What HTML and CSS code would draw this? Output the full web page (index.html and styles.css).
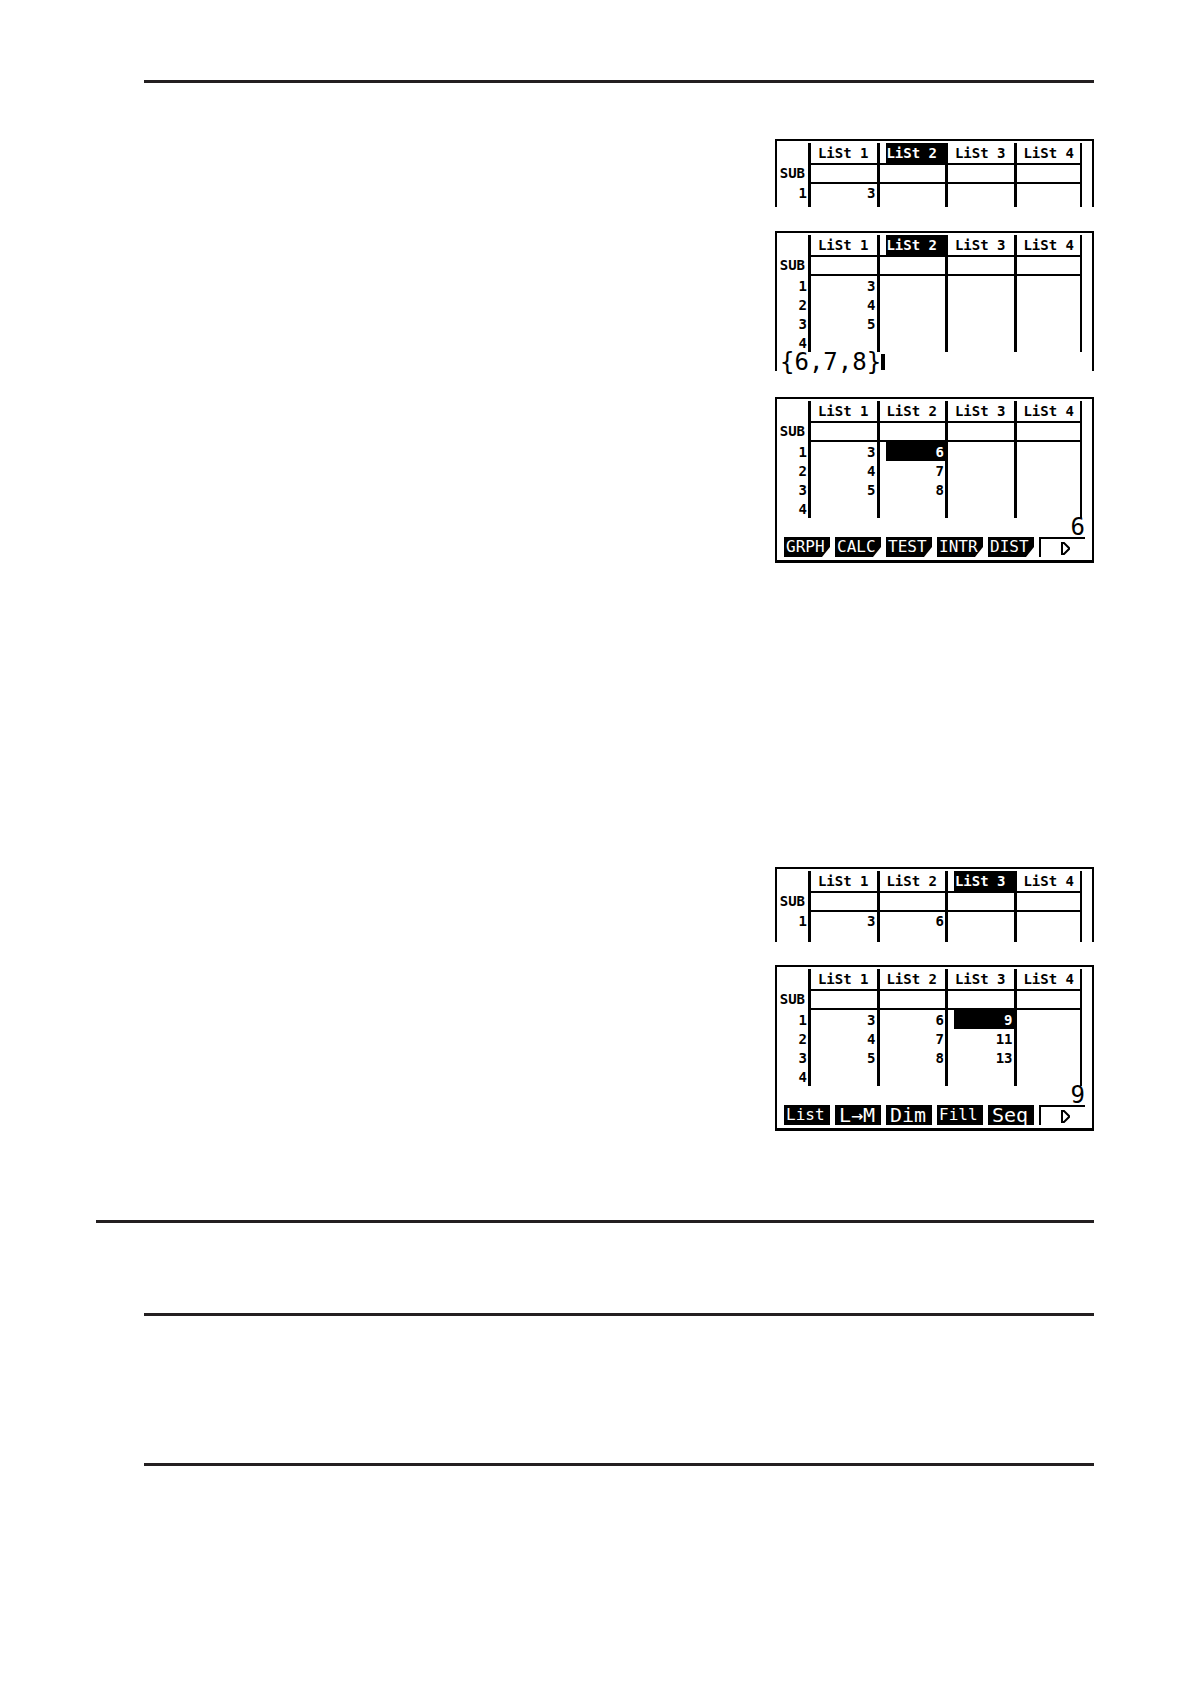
FILE: index.html
```
<!DOCTYPE html>
<html lang="en">
<head>
<meta charset="utf-8">
<meta name="viewport" content="width=device-width, initial-scale=1">
<title>List calculations</title>
<link rel="stylesheet" href="styles.css">
</head>
<body>
<main class="page">
  <hr class="rule rule-inset">

  <section class="screens screens-first">
    <div class="screen screen-open">
      <table class="lists">
        <thead>
          <tr><td></td><th>LiSt 1</th><th class="selected">LiSt 2</th><th>LiSt 3</th><th>LiSt 4</th></tr>
          <tr class="sub"><th>SUB</th><td></td><td></td><td></td><td></td></tr>
        </thead>
        <tbody>
          <tr class="last"><th>1</th><td>3</td><td></td><td></td><td></td></tr>
        </tbody>
      </table>
    </div>

    <div class="screen screen-open screen-entry">
      <table class="lists">
        <thead>
          <tr><td></td><th>LiSt 1</th><th class="selected">LiSt 2</th><th>LiSt 3</th><th>LiSt 4</th></tr>
          <tr class="sub"><th>SUB</th><td></td><td></td><td></td><td></td></tr>
        </thead>
        <tbody>
          <tr><th>1</th><td>3</td><td></td><td></td><td></td></tr>
          <tr><th>2</th><td>4</td><td></td><td></td><td></td></tr>
          <tr><th>3</th><td>5</td><td></td><td></td><td></td></tr>
          <tr><th>4</th><td></td><td></td><td></td><td></td></tr>
        </tbody>
      </table>
      <div class="entry">{6,7,8}<span class="cursor"></span></div>
    </div>

    <div class="screen">
      <table class="lists">
        <thead>
          <tr><td></td><th>LiSt 1</th><th>LiSt 2</th><th>LiSt 3</th><th>LiSt 4</th></tr>
          <tr class="sub"><th>SUB</th><td></td><td></td><td></td><td></td></tr>
        </thead>
        <tbody>
          <tr><th>1</th><td>3</td><td class="selected">6</td><td></td><td></td></tr>
          <tr><th>2</th><td>4</td><td>7</td><td></td><td></td></tr>
          <tr><th>3</th><td>5</td><td>8</td><td></td><td></td></tr>
          <tr><th>4</th><td></td><td></td><td></td><td></td></tr>
        </tbody>
      </table>
      <div class="value">6</div>
      <div class="keys">
        <button class="key key-menu">GRPH</button>
        <button class="key key-menu">CALC</button>
        <button class="key key-menu">TEST</button>
        <button class="key key-menu">INTR</button>
        <button class="key key-menu">DIST</button>
        <button class="key key-next" aria-label="Next"><svg width="10" height="13" viewBox="0 0 10 13"><path d="M1 1v11h2l5-5v-1l-5-5z"/></svg></button>
      </div>
    </div>
  </section>

  <section class="screens screens-second">
    <div class="screen screen-open">
      <table class="lists">
        <thead>
          <tr><td></td><th>LiSt 1</th><th>LiSt 2</th><th class="selected">LiSt 3</th><th>LiSt 4</th></tr>
          <tr class="sub"><th>SUB</th><td></td><td></td><td></td><td></td></tr>
        </thead>
        <tbody>
          <tr class="last"><th>1</th><td>3</td><td>6</td><td></td><td></td></tr>
        </tbody>
      </table>
    </div>

    <div class="screen">
      <table class="lists">
        <thead>
          <tr><td></td><th>LiSt 1</th><th>LiSt 2</th><th>LiSt 3</th><th>LiSt 4</th></tr>
          <tr class="sub"><th>SUB</th><td></td><td></td><td></td><td></td></tr>
        </thead>
        <tbody>
          <tr><th>1</th><td>3</td><td>6</td><td class="selected">9</td><td></td></tr>
          <tr><th>2</th><td>4</td><td>7</td><td>11</td><td></td></tr>
          <tr><th>3</th><td>5</td><td>8</td><td>13</td><td></td></tr>
          <tr><th>4</th><td></td><td></td><td></td><td></td></tr>
        </tbody>
      </table>
      <div class="value">9</div>
      <div class="keys">
        <button class="key">List</button>
        <button class="key key-short">L→M</button>
        <button class="key key-short">Dim</button>
        <button class="key">Fill</button>
        <button class="key key-short">Seq</button>
        <button class="key key-next" aria-label="Next"><svg width="10" height="13" viewBox="0 0 10 13"><path d="M1 1v11h2l5-5v-1l-5-5z"/></svg></button>
      </div>
    </div>
  </section>

  <hr class="rule rule-section">
  <hr class="rule rule-inset rule-topic">
  <hr class="rule rule-inset rule-end">
</main>
</body>
</html>
```
FILE: styles.css
```
* {
  box-sizing: border-box;
}

body {
  margin: 0;
  background: #fff;
  color: #000;
  font-family: "DejaVu Sans Mono", "Liberation Mono", monospace;
}

.page {
  padding: 80px 96px 218px;
}

.rule {
  height: 3px;
  margin: 0;
  border: 0;
  background: #231f20;
}

.rule-inset {
  margin-left: 48px;
}

.rule-section {
  margin-top: 89px;
}

.rule-topic {
  margin-top: 90px;
}

.rule-end {
  margin-top: 147px;
}

.screens {
  display: flex;
  flex-direction: column;
  align-items: flex-end;
}

.screens-first {
  gap: 24px;
  padding-top: 56px;
}

.screens-second {
  gap: 23px;
  padding-top: 304px;
}

.screen {
  width: 319px;
  padding-top: 2px;
  border: 2px solid #000;
  border-bottom-width: 3px;
}

.screen-open {
  border-bottom: 0;
}

.screen-entry {
  margin-bottom: 2px;
}

/* list editor grid */
.lists {
  width: 305px;
  table-layout: fixed;
  border-collapse: separate;
  border-spacing: 0;
  font-size: 14px;
  font-weight: bold;
  line-height: 18px;
}

.lists th,
.lists td {
  height: 19px;
  padding: 0 1px 0 0;
  border-left: 3px solid #000;
  text-align: right;
}

.lists th:first-child,
.lists td:first-child {
  width: 31px;
  border-left: 0;
}

.lists th:last-child,
.lists td:last-child {
  border-right: 2px solid #000;
}

.lists thead th + th,
.lists thead td + th {
  height: 22px;
  padding-right: 8px;
  border-bottom: 2px solid #000;
}

.lists thead th:last-child {
  padding-right: 6px;
}

.lists .sub td {
  border-bottom: 2px solid #000;
}

.lists .sub th {
  padding-right: 3px;
  line-height: 16px;
  vertical-align: top;
}

.lists .last th,
.lists .last td {
  height: 23px;
  vertical-align: top;
}

.screens-second .last th,
.screens-second .last td {
  height: 30px;
}

.lists .selected {
  background: linear-gradient(#000, #000) 6px 0 / 100% 100% no-repeat;
  color: #fff;
}

.entry {
  display: flex;
  align-items: center;
  height: 19px;
  padding-left: 3px;
  font-size: 24px;
  line-height: 18px;
}

.cursor {
  width: 4px;
  height: 16px;
  background: #000;
}

.value {
  height: 19px;
  padding-right: 7px;
  font-size: 24px;
  line-height: 18px;
  text-align: right;
}

/* function key menu */
.keys {
  display: flex;
  gap: 5px;
  padding: 0 7px 3px;
}

.key {
  width: 46px;
  height: 20px;
  padding: 0 0 0 2px;
  border: 0;
  background: #000;
  color: #fff;
  font: 16px/20px "DejaVu Sans Mono", "Liberation Mono", monospace;
  text-align: left;
}

.key-short {
  padding-left: 4px;
  font-size: 20px;
}

.key-menu {
  clip-path: polygon(0 0, 100% 0, 100% 10px, 38px 100%, 0 100%);
}

.key-next {
  display: flex;
  align-items: center;
  justify-content: center;
  border: solid #000;
  border-width: 2px 0 0 2px;
  padding: 0 0 0 6px;
  background: none;
}

.key-next path {
  fill: none;
  stroke: #000;
  stroke-width: 2;
}
```
